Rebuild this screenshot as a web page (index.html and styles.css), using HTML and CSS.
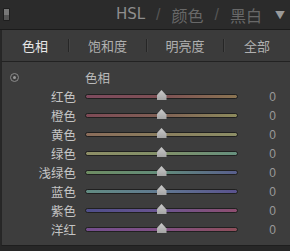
FILE: index.html
```html
<!DOCTYPE html>
<html lang="zh">
  <head>
    <meta charset="utf8" />
    <meta name="viewport" content="width=device-width, initial-scale=1" />
    <title>HSL</title>
    <link rel="stylesheet" href="styles.css">
  </head>
  <body>
    <div class="header">
      <span class="toggle"><span></span><span></span></span>
      <div class="modes">
        <span class="mode active">HSL</span>
        <span class="slash">/</span>
        <span class="mode">颜色</span>
        <span class="slash">/</span>
        <span class="mode">黑白</span>
        <span class="arrow">&#9660;</span>
      </div>
    </div>
    <div class="tabs">
      <span class="tab tab-first selected">色相</span>
      <span class="sep"></span>
      <span class="tab tab-second">饱和度</span>
      <span class="sep"></span>
      <span class="tab tab-third">明亮度</span>
      <span class="sep"></span>
      <span class="tab tab-last">全部</span>
    </div>
    <div class="panel">
      <div class="row heading">
        <span class="target"></span>
        <span class="title">色相</span>
        <span></span>
      </div>
      <div class="row">
        <span class="label">红色</span>
        <span class="track red"><span class="thumb"></span></span>
        <span class="value">0</span>
      </div>
      <div class="row">
        <span class="label">橙色</span>
        <span class="track orange"><span class="thumb"></span></span>
        <span class="value">0</span>
      </div>
      <div class="row">
        <span class="label">黄色</span>
        <span class="track yellow"><span class="thumb"></span></span>
        <span class="value">0</span>
      </div>
      <div class="row">
        <span class="label">绿色</span>
        <span class="track green"><span class="thumb"></span></span>
        <span class="value">0</span>
      </div>
      <div class="row">
        <span class="label">浅绿色</span>
        <span class="track aqua"><span class="thumb"></span></span>
        <span class="value">0</span>
      </div>
      <div class="row">
        <span class="label">蓝色</span>
        <span class="track blue"><span class="thumb"></span></span>
        <span class="value">0</span>
      </div>
      <div class="row">
        <span class="label">紫色</span>
        <span class="track purple"><span class="thumb"></span></span>
        <span class="value">0</span>
      </div>
      <div class="row">
        <span class="label">洋红</span>
        <span class="track magenta"><span class="thumb"></span></span>
        <span class="value">0</span>
      </div>
    </div>
  </body>
</html>
```

FILE: styles.css
```css
/* Reset */
body, html {
  margin: 0;
  padding: 0;
  font-family: "Noto Sans CJK SC", "Noto Sans", sans-serif;
}
* {
  box-sizing: border-box;
}
body {
  width: 290px;
  height: 251px;
  background: #272727;
  overflow: hidden;
}

/* Header */
.header {
  height: 30px;
  display: flex;
  align-items: center;
  justify-content: space-between;
  background: #2b2b2b;
  border-bottom: 1px solid #1b1b1b;
  padding: 0 5px 0 3px;
}
.toggle {
  display: flex;
  flex-direction: column;
  width: 7px;
  height: 13px;
  border: 1px solid #1e1e1e;
  border-radius: 1px;
}
.toggle span {
  flex: 1;
  background: #777;
}
.toggle span + span {
  background: #555;
}
.modes {
  display: flex;
  align-items: center;
  gap: 11px;
  font-size: 16px;
  color: #686868;
  line-height: 1;
}
.mode.active {
  color: #8e8e8e;
  font-family: "DejaVu Sans", sans-serif;
  font-size: 15px;
}
.slash {
  color: #555;
  font-family: "Liberation Sans", sans-serif;
}
.arrow {
  font-size: 10px;
  color: #9a9a9a;
  margin-left: 2px;
}

/* Tabs */
.tabs {
  height: 32px;
  display: flex;
  align-items: center;
  margin-left: 1px;
  border-left: 1px solid #262626;
  background: #3b3b3b;
  border-bottom: 1px solid #222;
  font-size: 13px;
  color: #b0b0b0;
}
.tab {
  text-align: center;
}
.tab-first { width: 66px; }
.tab-second { width: 77px; }
.tab-third { width: 76px; }
.tab-last { flex: 1; }
.tab.selected {
  color: #e6e6e6;
}
.sep {
  width: 1px;
  height: 13px;
  background: #262626;
  box-shadow: 1px 0 0 #444;
}

/* Panel */
.panel {
  height: 184px;
  margin-left: 1px;
  border-left: 1px solid #262626;
  border-bottom: 1px solid #1e1e1e;
  background: #3d3d3d;
  padding-top: 6px;
}
.row {
  display: grid;
  grid-template-columns: 74px 153px 1fr;
  column-gap: 9px;
  align-items: center;
  height: 19px;
  font-size: 12.5px;
  color: #c4c4c4;
}
.label {
  text-align: right;
}
.value {
  text-align: right;
  padding-right: 14px;
  color: #9a9a9a;
  font-family: "Liberation Sans", sans-serif;
  font-size: 12px;
}
.heading .title {
  color: #bababa;
}
.target {
  width: 9px;
  height: 9px;
  margin-left: 8px;
  border: 1px solid #8a8a8a;
  border-radius: 50%;
  display: flex;
  align-items: center;
  justify-content: center;
}
.target::after {
  content: "";
  width: 3px;
  height: 3px;
  border-radius: 50%;
  background: #9a9a9a;
}

/* Sliders */
.track {
  position: relative;
  height: 5px;
  border: 1px solid #202020;
  border-radius: 3px;
}
.thumb {
  position: absolute;
  left: 50%;
  top: -5px;
  width: 10px;
  height: 10px;
  margin-left: -5px;
  background: linear-gradient(#cacaca, #a4a4a4);
  clip-path: polygon(50% 0, 100% 55%, 100% 100%, 0 100%, 0 55%);
}
.red { background: linear-gradient(90deg, #7e4a5e, #7e5054 50%, #8a7452); }
.orange { background: linear-gradient(90deg, #7e4a56, #806054 50%, #8c8a5c); }
.yellow { background: linear-gradient(90deg, #8a6c5a, #8a7e5e 50%, #8c8e66); }
.green { background: linear-gradient(90deg, #8e8e66, #829068 50%, #66907e); }
.aqua { background: linear-gradient(90deg, #6e8c62, #628c7a 50%, #585e8c); }
.blue { background: linear-gradient(90deg, #628c82, #607890 50%, #5a528e); }
.purple { background: linear-gradient(90deg, #4e4e8a, #6a5490 50%, #8e4e70); }
.magenta { background: linear-gradient(90deg, #744e8e, #805084 50%, #8e4e5a); }
```
